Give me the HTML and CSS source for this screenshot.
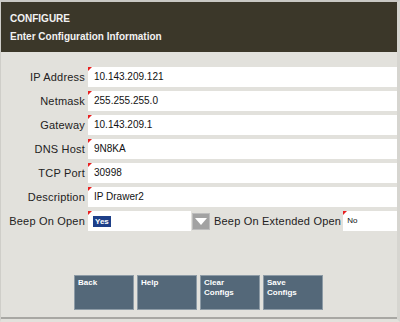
FILE: index.html
```html
<!DOCTYPE html>
<html lang="en">
<head>
    <meta charset="UTF-8">
    <title>Configure</title>
    <link rel="stylesheet" href="styles.css">
</head>
<body>
    <div class="frame">
        <div class="header">
            <div class="title">CONFIGURE</div>
            <div class="subtitle">Enter Configuration Information</div>
        </div>
        <div class="form">
            <div class="row">
                <label class="label">IP Address</label>
                <div class="field">10.143.209.121</div>
            </div>
            <div class="row">
                <label class="label">Netmask</label>
                <div class="field">255.255.255.0</div>
            </div>
            <div class="row">
                <label class="label">Gateway</label>
                <div class="field">10.143.209.1</div>
            </div>
            <div class="row">
                <label class="label">DNS Host</label>
                <div class="field">9N8KA</div>
            </div>
            <div class="row">
                <label class="label">TCP Port</label>
                <div class="field">30998</div>
            </div>
            <div class="row">
                <label class="label">Description</label>
                <div class="field">IP Drawer2</div>
            </div>
            <div class="row">
                <label class="label">Beep On Open</label>
                <div class="field select"><span class="selected">Yes</span></div>
                <div class="arrow"><svg width="12" height="7" viewBox="0 0 12 7"><path d="M0 0 H12 L6 7 Z" fill="#fff"/></svg></div>
                <label class="label label-inline">Beep On Extended Open</label>
                <div class="field small">No</div>
            </div>
        </div>
        <div class="buttons">
            <div class="btn">Back</div>
            <div class="btn">Help</div>
            <div class="btn">Clear<br>Configs</div>
            <div class="btn">Save<br>Configs</div>
        </div>
    </div>
</body>
</html>
```

FILE: styles.css
```css
body {
    margin: 0;
    padding: 0;
    background-color: #e2e1dc;
    font-family: "Liberation Sans", Arial, sans-serif;
}
.frame {
    width: 400px;
    height: 322px;
    box-sizing: border-box;
    border-top: 2px solid #c9c8c4;
    border-left: 1px solid #cfcec9;
    border-right: 3px solid #d6d5d0;
    border-bottom: 3px solid #e2e1dc;
    background-color: #e2e1dc;
    box-shadow: inset 0 -2px 0 #a8a7a3;
    position: relative;
}
.header {
    height: 50px;
    box-sizing: border-box;
    background-color: #3b3729;
    color: #f2f2f2;
    font-weight: bold;
    font-size: 10px;
    padding: 11px 0 0 9px;
}
.title {
    line-height: 12px;
}
.subtitle {
    margin-top: 6px;
    line-height: 12px;
}
.form {
    margin-top: 15px;
    display: flex;
    flex-direction: column;
    gap: 4px;
}
.row {
    display: flex;
    height: 20px;
    align-items: center;
}
.label {
    width: 84px;
    text-align: right;
    font-size: 11px;
    letter-spacing: 0.2px;
    color: #222;
    margin-right: 3px;
}
.field {
    position: relative;
    flex: 1;
    height: 20px;
    box-sizing: border-box;
    background-color: #fff;
    font-size: 10px;
    line-height: 20px;
    padding-left: 6px;
    color: #111;
}
.field::before {
    content: "";
    position: absolute;
    left: 0;
    top: 0;
    border-top: 4px solid #e82020;
    border-right: 4px solid transparent;
}
.select {
    flex: none;
    width: 103px;
    padding-left: 5px;
}
.selected {
    display: inline-block;
    background-color: #1d3f88;
    color: #fff;
    font-size: 8px;
    font-weight: bold;
    line-height: 11px;
    padding: 0 2px;
}
.arrow {
    width: 18px;
    height: 17px;
    box-sizing: border-box;
    margin-left: 1px;
    background-color: #a2a2a2;
    border: 1px solid #bdbdbd;
    display: flex;
    justify-content: center;
    align-items: center;
}
.label-inline {
    width: auto;
    margin-left: 4px;
    margin-right: 2px;
}
.small {
    font-size: 8px;
    padding-left: 4px;
}
.buttons {
    display: flex;
    gap: 3px;
    margin: 44px 0 0 73px;
}
.btn {
    width: 60px;
    height: 35px;
    box-sizing: border-box;
    background-color: #546879;
    border: 1px solid #8d9ba6;
    color: #fff;
    font-size: 8px;
    font-weight: bold;
    line-height: 10px;
    padding: 2px 3px;
}
```
